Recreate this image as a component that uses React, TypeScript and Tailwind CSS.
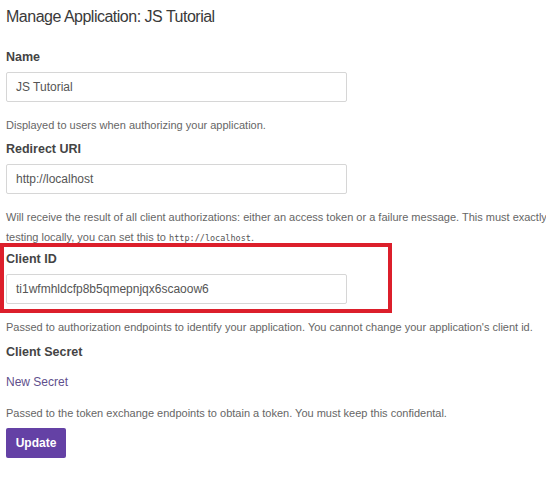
import React from 'react';

const Label = ({ children }: { children: React.ReactNode }) => (
  <div className="h-5 text-[12.5px] leading-5 font-bold text-[#444]">{children}</div>
);

const Field = ({ value }: { value: string }) => (
  <div className="mt-[5px] flex h-[30px] w-[341px] items-center rounded-[2px] border border-[#d6d6d6] bg-white px-[9px] text-[12px] text-[#555]">
    {value}
  </div>
);

const Help = ({ children }: { children: React.ReactNode }) => (
  <p className="mt-[13px] text-[11px] leading-5 text-[#666]">{children}</p>
);

const App = () => {
  return (
    <div className="min-h-screen w-full overflow-hidden bg-white pl-[6px] font-['Liberation_Sans',Arial,sans-serif]">
      <h1 className="pt-[7px] text-[16px] leading-5 font-normal tracking-[-0.5px] text-[#3a3a3a]">
        Manage Application: JS Tutorial
      </h1>

      {/* Name */}
      <div className="mt-5">
        <Label>Name</Label>
        <Field value="JS Tutorial" />
        <Help>Displayed to users when authorizing your application.</Help>
      </div>

      {/* Redirect URI */}
      <div className="mt-1">
        <Label>Redirect URI</Label>
        <Field value="http://localhost" />
        <p className="mt-[13px] whitespace-nowrap text-[11px] leading-5 text-[#666]">
          Will receive the result of all client authorizations: either an access token or a failure message. This must exactly match the redirect_uri parameter passed to the authorization endpoint. When
          <br />
          testing locally, you can set this to{' '}
          <code className="font-['DejaVu_Sans_Mono',monospace] text-[8.5px] leading-none text-[#555]">http://localhost</code>.
        </p>
      </div>

      {/* Client ID (highlighted) */}
      <div className="relative mt-[2px]">
        <div className="absolute -top-[6px] -left-[6px] h-[70px] w-[392px] border-4 border-[#dc1f2b]" />
        <Label>Client ID</Label>
        <Field value="ti1wfmhldcfp8b5qmepnjqx6scaoow6" />
        <Help>Passed to authorization endpoints to identify your application. You cannot change your application's client id.</Help>
      </div>

      {/* Client Secret */}
      <div className="mt-[5px]">
        <Label>Client Secret</Label>
        <a href="#" className="mt-[10px] block h-5 text-[12px] leading-5 text-[#5f4f8c]">
          New Secret
        </a>
        <p className="mt-[11px] text-[11px] leading-5 text-[#666]">
          Passed to the token exchange endpoints to obtain a token. You must keep this confidental.
        </p>
      </div>

      <button className="mt-[5px] h-[30px] w-[60px] rounded-[2px] bg-[#6441a5] text-[12px] font-bold text-white">
        Update
      </button>
    </div>
  );
};

export default App;
